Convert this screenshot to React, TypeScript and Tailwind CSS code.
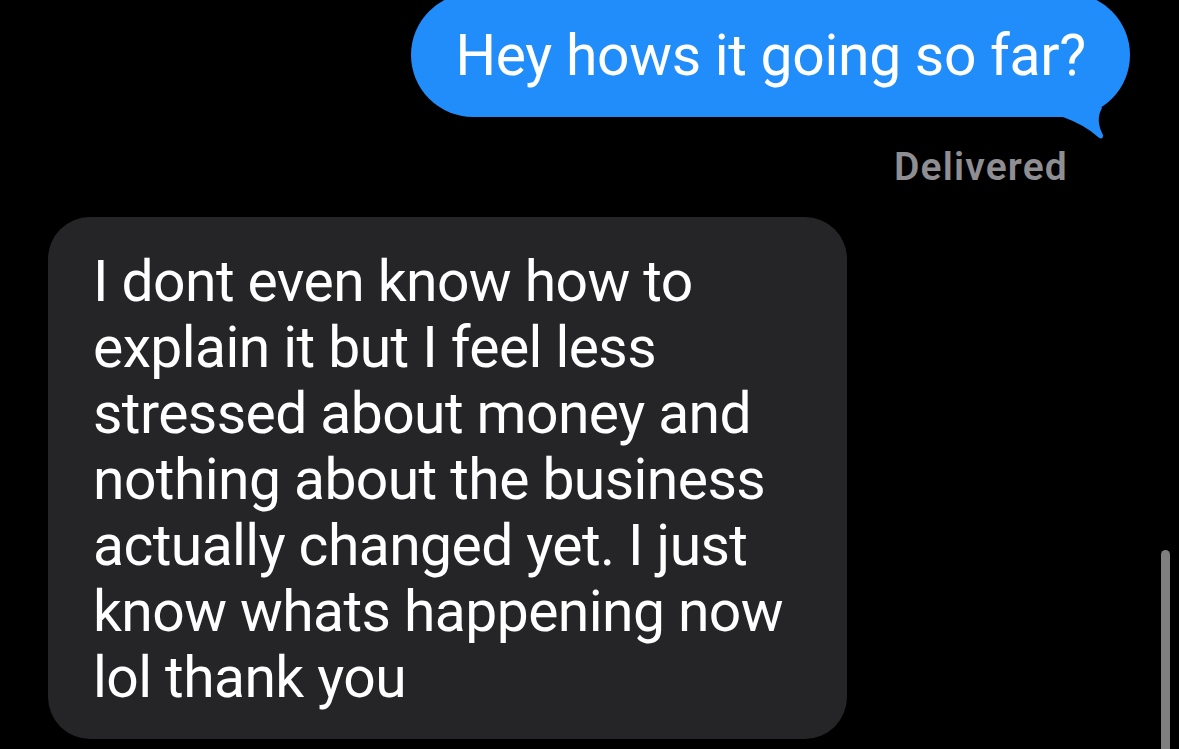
import React from 'react';

const lines = [
  'I dont even know how to',
  'explain it but I feel less',
  'stressed about money and',
  'nothing about the business',
  'actually changed yet. I just',
  'know whats happening now',
  'lol thank you',
];

const BubbleTail: React.FC = () => (
  <svg
    className="absolute right-[20px] bottom-[-28px]"
    width="60"
    height="55"
    viewBox="0 0 60 55"
  >
    <path
      d="M0 0 L0 20 L5 27 L13 27 Q35 35 48 47 Q53 51 53 45 Q45 30 52 18 L40 0 Z"
      fill="#218dfb"
    />
  </svg>
);

const App: React.FC = () => {
  return (
    <div
      className="relative h-[749px] w-full overflow-hidden bg-black text-white"
      style={{ fontFamily: 'Roboto, "Liberation Sans", Arial, sans-serif' }}
    >
      {/* sent message */}
      <div className="flex justify-end pr-[49px]">
        <div className="relative mt-[-7px] rounded-[62px] bg-[#218dfb] px-[44px] pt-[30px] pb-[28px] text-[57px] leading-[66px] tracking-[-0.005em]">
          Hey hows it going so far?
          <BubbleTail />
        </div>
      </div>

      <div className="mt-[28px] pr-[111px] text-right text-[39px] leading-[44px] font-semibold tracking-[0.03em] text-[#8e8e93]">
        Delivered
      </div>

      {/* received message */}
      <div className="mt-[28px] ml-[48px] w-[799px] rounded-[42px] bg-[#252527] px-[45px] pt-[32px] pb-[28px] text-[57px] leading-[66px] tracking-[-0.01em]">
        {lines.map((l) => (
          <div key={l} className="whitespace-nowrap">
            {l}
          </div>
        ))}
      </div>

      {/* scroll indicator */}
      <div className="absolute right-[9px] top-[550px] h-[220px] w-[9px] rounded-full bg-[#7f7f7f]" />
    </div>
  );
};

export default App;
